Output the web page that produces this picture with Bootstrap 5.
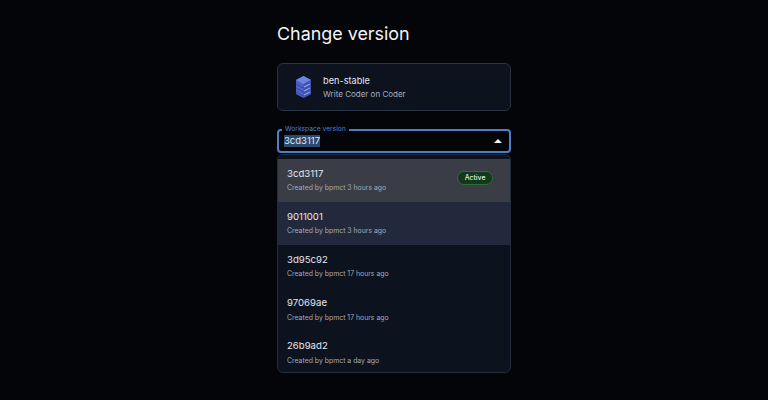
<!doctype html>
<html lang="en">
<head>
<meta charset="utf-8">
<title>Change version</title>
<link href="https://cdn.jsdelivr.net/npm/bootstrap@5.3.0/dist/css/bootstrap.min.css" rel="stylesheet">
<style>
html,body{height:100%;}
body{background:#030509;font-family:Inter,"Liberation Sans",sans-serif;color:#e8ebf0;overflow:hidden;}
.pane{width:234px;margin-left:277px;padding-top:21px;}
.ttl{font-size:17.9px;line-height:26px;font-weight:400;margin:0 0 16px;color:#f3f5f8;}
.wscard{height:48px;background:#0c121e;border:1px solid #2a3445;border-radius:6px;padding-left:17px;gap:11px;}
.wsname{font-size:9.2px;line-height:13px;color:#e4e7ec;}
.wsdesc{font-size:8px;line-height:12px;color:#a7aeba;margin-top:1px;}
.fieldbox{height:24px;margin-top:18px;border:2px solid #4d7fc9;border-radius:4px;padding:0 7px 0 5px;}
.fieldlbl{position:absolute;left:3px;top:-6px;font-size:6.7px;line-height:9px;padding:0 3px;background:#030509;color:#4f80c8;}
.fieldval{font-size:9.5px;line-height:12px;background:#2c4a70;color:#dfe5ee;}
.caret{width:0;height:0;border-left:4px solid transparent;border-right:4px solid transparent;border-bottom:4px solid #f2f4f7;}
.popup{position:absolute;left:-2px;right:-2px;top:23px;height:219px;background:#0c121e;border:1px solid #242d3d;border-radius:6px;padding-top:3.500px;overflow:hidden;z-index:5;}
.vitem{height:43.200px;padding:8px 17px 0 9px;}
.vitem.sel{background:#3a3d45;}
.vitem.hov{background:#22293c;}
.vname{font-size:9.600px;line-height:13px;color:#e4e7ec;}
.vmeta{font-size:6.900px;line-height:9px;color:#a2a9b6;margin-top:3.500px;}
.actpill{font-size:6.900px;font-weight:500;line-height:10px;padding:1px 6.500px;border:1.500px solid #2f6b3a;border-radius:8px;background:#14381e;color:#dbeedd;margin-top:4px;}
</style>
</head>
<body>
<main class="pane">
  <h1 class="ttl">Change version</h1>
  <div class="wscard d-flex align-items-center">
    <svg width="17" height="24" viewBox="0 0 17 24" aria-hidden="true">
      <path d="M8.5 1 16 5v14l-7.500 4L1 19V5z" fill="#4c62c9"/>
      <path d="M8.500 1 16 5 8.500 9 1 5z" fill="#6d83e6"/>
      <path d="M8.500 9 16 5v14l-7.500 4z" fill="#3d51ad"/>
      <path d="M9 12l6-3M9 16l6-3M9 20l6-3" stroke="#8fa2ef" stroke-width="1.200" fill="none"/>
      <path d="M1 9l7.500 4M1 13l7.500 4M1 17l7.500 4" stroke="#2f3f91" stroke-width=".8" fill="none"/>
    </svg>
    <div>
      <div class="wsname">ben-stable</div>
      <div class="wsdesc">Write Coder on Coder</div>
    </div>
  </div>
  <div class="fieldbox position-relative d-flex align-items-center justify-content-between">
    <span class="fieldlbl">Workspace version</span>
    <span class="fieldval">3cd3117</span>
    <span class="caret"></span>
    <div class="popup">
      <div class="vitem sel d-flex justify-content-between align-items-start">
        <div><div class="vname">3cd3117</div><div class="vmeta">Created by bpmct 3 hours ago</div></div>
        <span class="actpill">Active</span>
      </div>
      <div class="vitem hov"><div class="vname">9011001</div><div class="vmeta">Created by bpmct 3 hours ago</div></div>
      <div class="vitem"><div class="vname">3d95c92</div><div class="vmeta">Created by bpmct 17 hours ago</div></div>
      <div class="vitem"><div class="vname">97069ae</div><div class="vmeta">Created by bpmct 17 hours ago</div></div>
      <div class="vitem"><div class="vname">26b9ad2</div><div class="vmeta">Created by bpmct a day ago</div></div>
    </div>
  </div>
</main>
<script src="https://cdn.jsdelivr.net/npm/bootstrap@5.3.0/dist/js/bootstrap.bundle.min.js"></script>
</body>
</html>
